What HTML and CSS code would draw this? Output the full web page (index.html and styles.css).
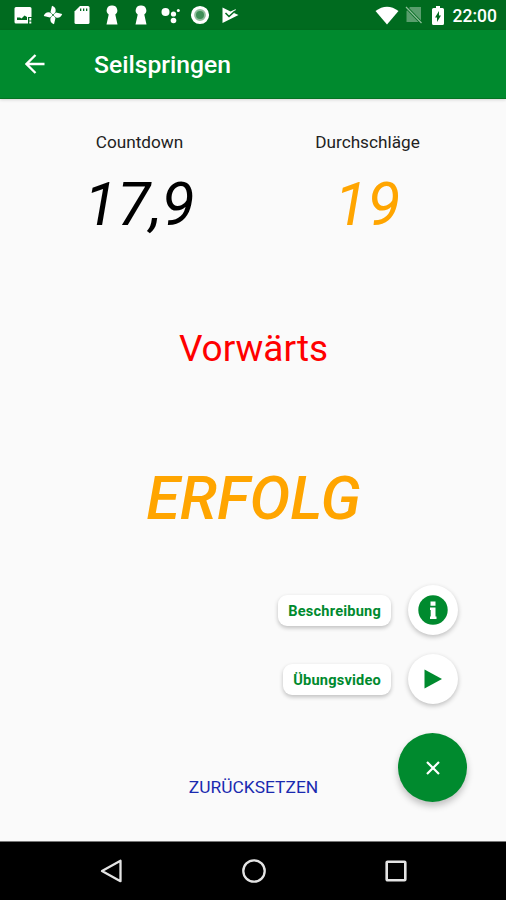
FILE: index.html
```html
<!DOCTYPE html>
<html lang="de">
<head>
    <meta charset="UTF-8">
    <meta name="viewport" content="width=device-width, initial-scale=1.0">
    <title>Seilspringen</title>
    <link rel="stylesheet" href="styles.css">
</head>
<body>
    <div class="status-bar">
        <div class="notifications">
            <svg viewBox="0 0 20 20"><path fill="#fff" d="M3 2h14q1.500 0 1.500 1.500V12H15v6.500H3q-1.500 0-1.500-1.500V3.500Q1.500 2 3 2zM16.300 13h2v2.500h-2zM16.300 16.500h2v2h-2z"/><path fill="#006b1f" d="M4 15v-2.500h3l1.500 1 3-3 2.500 1.500V15z"/></svg>
            <svg viewBox="0 0 20 20"><path fill="#fff" d="M10 10L7.500 7 9 .8q4.500 1.500 3.500 6.200zM10 10l3-2.500 6.200 1.500q-1.500 4.500-6.200 3.500zM10 10l2.500 3-1.500 6.200q-4.500-1.500-3.500-6.200zM10 10l-3 2.500-6.200-1.500q1.500-4.500 6.200-3.500z"/><circle cx="10" cy="10" r=".9" fill="#006b1f"/></svg>
            <svg viewBox="0 0 20 20"><path fill="#fff" d="M8 1h8q1.500 0 1.500 1.500v15q0 1.500-1.500 1.500H4q-1.500 0-1.500-1.500V6.500z"/><path fill="#006b1f" d="M8 3.500h1.300v2.500H8zM11 3.500h1.300v2.500H11zM14 3.500h1.300v2.500H14z"/></svg>
            <svg viewBox="0 0 20 20"><path fill="#fff" d="M10 .5a5 5 0 0 1 3.300 9L15.500 19.500h-11L6.700 9.500A5 5 0 0 1 10 .5z"/></svg>
            <svg viewBox="0 0 20 20"><path fill="#fff" d="M10 .5a5 5 0 0 1 3.300 9L15.500 19.500h-11L6.700 9.500A5 5 0 0 1 10 .5z"/></svg>
            <svg viewBox="0 0 20 20"><g fill="#fff"><circle cx="4.500" cy="7" r="4"/><circle cx="12.500" cy="9" r="2.600"/><circle cx="17.300" cy="5.500" r="1.500"/><circle cx="12.500" cy="15.500" r="2.800"/></g></svg>
            <svg viewBox="0 0 20 20"><circle cx="10" cy="10" r="7.500" fill="#8fbf9b" stroke="#fff" stroke-width="3.200"/><circle cx="10" cy="10" r="4" fill="#3f8f57"/></svg>
            <svg viewBox="0 0 20 20"><path fill="#fff" d="M2.500 2.500l8 4L16 4l-2 4 4.500 2-16 8z"/><path d="M5.500 8l3.500 3.500 6-5.500" fill="none" stroke="#006b1f" stroke-width="1.500"/></svg>
        </div>
        <div class="system">
            <svg class="wifi" viewBox="0 0 24 19"><path fill="#fff" d="M0.500 5Q12-3.500 23.500 5L12 18.500z"/></svg>
            <svg class="sim" viewBox="0 0 18 18"><path fill="#fff" fill-opacity=".35" d="M5 1h11v15H1.500V5z"/><path d="M1 1l15.500 16" stroke="#006b1f" stroke-width="3"/><path d="M1 1l15.500 16" stroke="#8fbf9b" stroke-width="1.200"/></svg>
            <svg class="battery" viewBox="0 0 12 19"><path fill="#fff" d="M4 0h4v2h2.500Q12 2 12 3.500v14q0 1.500-1.500 1.500h-9Q0 19 0 17.500v-14Q0 2 1.500 2H4z"/><path fill="#006b1f" d="M7 5v4.500h2L5 16v-4.500H3z"/></svg>
            <span class="time">22:00</span>
        </div>
    </div>

    <div class="app-bar">
        <svg class="back" viewBox="0 0 20 20"><path d="M19.500 10H2M10.500 1L1.500 10l9 9" fill="none" stroke="#fff" stroke-width="2.300"/></svg>
        <h1>Seilspringen</h1>
    </div>

    <div class="content">
        <div class="counters">
            <div class="counter">
                <div class="label">Countdown</div>
                <div class="value">17,9</div>
            </div>
            <div class="counter">
                <div class="label">Durchschläge</div>
                <div class="value hits">19</div>
            </div>
        </div>
        <div class="direction">Vorwärts</div>
        <div class="result">ERFOLG</div>
        <button class="reset-btn">ZURÜCKSETZEN</button>

        <div class="fab-menu">
            <div class="fab-item">
                <span class="fab-label">Beschreibung</span>
                <button class="fab-mini"><svg viewBox="0 0 30 30"><circle cx="15" cy="15" r="14.700" fill="#008a2e"/><path fill="#fff" d="M12.500 6.500h5v4.200h-5zM12 12.500h5.500v9h1V24H12v-2.500h.7V15H12z"/></svg></button>
            </div>
            <div class="fab-item">
                <span class="fab-label">Übungsvideo</span>
                <button class="fab-mini"><svg viewBox="0 0 30 30"><path fill="#008a2e" d="M6.500 5.500l17.500 9.500-17.500 9.500z"/></svg></button>
            </div>
            <button class="fab-main"><svg viewBox="0 0 14 14"><path d="M1 1l12 12M13 1L1 13" stroke="#fff" stroke-width="2.200"/></svg></button>
        </div>
    </div>

    <div class="nav-bar">
        <svg viewBox="0 0 24 24"><path d="M20.500 1.800v20.400L2 12z" fill="none" stroke="#e4e4e4" stroke-width="2.300" stroke-linejoin="round"/></svg>
        <svg viewBox="0 0 24 24"><circle cx="12" cy="12" r="10.700" fill="none" stroke="#e4e4e4" stroke-width="2.300"/></svg>
        <svg viewBox="0 0 24 24"><rect x="2.700" y="2.700" width="18.600" height="18.600" rx=".8" fill="none" stroke="#e4e4e4" stroke-width="2.600"/></svg>
    </div>
</body>
</html>
```

FILE: styles.css
```css
* {
    box-sizing: border-box;
}
body {
    margin: 0;
    height: 900px;
    font-family: Roboto, sans-serif;
    background: #fafafa;
    display: flex;
    flex-direction: column;
    overflow: hidden;
}
svg {
    display: block;
}
button {
    font-family: inherit;
    border: none;
    padding: 0;
    cursor: pointer;
}
.status-bar {
    height: 30px;
    flex: none;
    background: #006b1f;
    display: flex;
    justify-content: space-between;
    align-items: center;
    padding: 0 9px 0 13px;
}
.notifications {
    display: flex;
    gap: 9.5px;
}
.notifications svg {
    width: 20px;
    height: 20px;
}
.system {
    display: flex;
    align-items: center;
}
.wifi {
    width: 24px;
    height: 19px;
    margin-right: 6px;
}
.sim {
    width: 18px;
    height: 18px;
    margin-right: 9px;
}
.battery {
    width: 12px;
    height: 19px;
    margin-right: 9px;
}
.time {
    font-size: 17.5px;
    font-weight: 500;
    color: #fff;
    line-height: 30px;
    padding-top: 2px;
}
.app-bar {
    height: 69px;
    flex: none;
    background: #008a2e;
    border-bottom: 1px solid #047322;
    box-shadow: 0 1px 3px rgba(0,0,0,0.15);
    display: flex;
    align-items: center;
    padding-left: 25px;
}
.back {
    width: 20px;
    height: 20px;
    margin-right: 49px;
}
.app-bar h1 {
    margin: 0;
    font-size: 24.7px;
    font-weight: 500;
    color: #fff;
}
.content {
    position: relative;
    flex: 1;
    display: flex;
    flex-direction: column;
    align-items: center;
    padding: 31px 0 0 1px;
}
.counters {
    display: grid;
    grid-template-columns: 1fr 1fr;
    width: 456px;
}
.counter {
    text-align: center;
}
.label {
    font-size: 17.2px;
    line-height: 24px;
    color: #222;
}
.value {
    font-size: 60.5px;
    font-style: italic;
    line-height: 72px;
    margin-top: 15px;
    color: #000;
}
.value.hits {
    color: #ffa500;
}
.direction {
    font-size: 37px;
    line-height: 44px;
    margin-top: 86px;
    color: #f00;
}
.result {
    font-size: 61px;
    font-weight: 500;
    font-style: italic;
    line-height: 72px;
    margin-top: 91px;
    color: #ffa500;
}
.reset-btn {
    font-size: 17.4px;
    line-height: 24px;
    margin-top: 241px;
    background: none;
    color: #1a2ab0;
}
.fab-menu {
    position: absolute;
    right: 39px;
    bottom: 39px;
    display: flex;
    flex-direction: column;
    align-items: flex-end;
}
.fab-item {
    display: flex;
    align-items: center;
    gap: 17px;
    margin: 0 9px 19px 0;
}
.fab-label {
    height: 31px;
    padding: 0 10px;
    border-radius: 9px;
    background: #fff;
    box-shadow: 0 2px 4px rgba(0,0,0,0.24);
    font-size: 14.6px;
    font-weight: bold;
    line-height: 32px;
    letter-spacing: 0.2px;
    color: #008a2e;
}
.fab-mini, .fab-main {
    border-radius: 50%;
    display: flex;
    align-items: center;
    justify-content: center;
}
.fab-mini {
    width: 50px;
    height: 50px;
    background: #fff;
    box-shadow: 0 2px 5px rgba(0,0,0,0.24);
}
.fab-mini svg {
    width: 30px;
    height: 30px;
}
.fab-main {
    width: 69px;
    height: 69px;
    margin-top: 10px;
    background: #008a2e;
    box-shadow: 0 4px 7px rgba(0,0,0,0.24);
}
.fab-main svg {
    width: 14px;
    height: 14px;
}
.nav-bar {
    height: 59px;
    flex: none;
    background: #000;
    border-top: 1px solid #777;
    display: flex;
    justify-content: center;
    align-items: center;
    gap: 118px;
    padding-left: 2px;
}
.nav-bar svg {
    width: 24px;
    height: 24px;
}
```
